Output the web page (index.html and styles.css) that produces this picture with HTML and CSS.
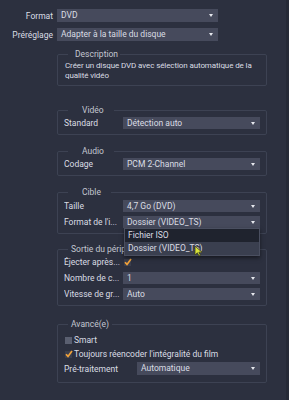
FILE: index.html
```html
<!DOCTYPE html>
<html lang="fr">
<head>
	<meta charset="UTF-8">
	<meta name="viewport" content="width=device-width, initial-scale=1.0">
	<title>Paramètres de gravure</title>
	<link rel="stylesheet" href="styles.css">
</head>
<body>
<div class="panel">
	<div class="top-form">
		<label class="top-label">Format</label>
		<div class="combo combo-top">DVD</div>
		<label class="top-label">Préréglage</label>
		<div class="combo combo-top">Adapter à la taille du disque</div>
	</div>

	<!-- Description -->
	<fieldset class="group group-desc">
		<legend>Description</legend>
		<p class="desc-text">Créer un disque DVD avec sélection automatique de la qualité vidéo</p>
	</fieldset>

	<!-- Vidéo -->
	<fieldset class="group group-mid">
		<legend>Vidéo</legend>
		<div class="row">
			<span class="row-label">Standard</span>
			<div class="combo">Détection auto</div>
		</div>
	</fieldset>

	<!-- Audio -->
	<fieldset class="group group-mid">
		<legend>Audio</legend>
		<div class="row">
			<span class="row-label">Codage</span>
			<div class="combo">PCM 2-Channel</div>
		</div>
	</fieldset>

	<!-- Cible -->
	<fieldset class="group group-mid group-cible">
		<legend>Cible</legend>
		<div class="row">
			<span class="row-label">Taille</span>
			<div class="combo">4,7 Go (DVD)</div>
		</div>
		<div class="row">
			<span class="row-label">Format de l'i...</span>
			<div class="combo combo-open">
				Dossier (VIDEO_TS)
				<ul class="dropdown">
					<li>Fichier ISO</li>
					<li class="hover">Dossier (VIDEO_TS)</li>
				</ul>
				<svg class="cursor" width="9" height="12" viewBox="0 0 9 12"><path d="M1 1 L1 10 L3.4 7.8 L5 11 L6.4 10.3 L4.9 7.2 L8 7.2 Z" fill="#d8e23a" stroke="#3a3f1a" stroke-width="0.8"/></svg>
			</div>
		</div>
	</fieldset>

	<!-- Sortie du périphérique -->
	<fieldset class="group group-sortie">
		<legend>Sortie du périphérique</legend>
		<div class="row">
			<span class="row-label">Éjecter après...</span>
			<div class="check-cell">
				<span class="check checked"><svg width="8" height="8" viewBox="0 0 8 8"><path d="M1 4.2 L3 6.4 L7 1" fill="none" stroke="#f2a23a" stroke-width="1.7"/></svg></span>
			</div>
		</div>
		<div class="row">
			<span class="row-label">Nombre de c...</span>
			<div class="combo">1</div>
		</div>
		<div class="row">
			<span class="row-label">Vitesse de gr...</span>
			<div class="combo">Auto</div>
		</div>
	</fieldset>

	<!-- Avancé(e) -->
	<fieldset class="group group-avance">
		<legend>Avancé(e)</legend>
		<div class="check-row">
			<span class="check"></span>
			<span>Smart</span>
		</div>
		<div class="check-row">
			<span class="check checked"><svg width="8" height="8" viewBox="0 0 8 8"><path d="M1 4.2 L3 6.4 L7 1" fill="none" stroke="#f2a23a" stroke-width="1.7"/></svg></span>
			<span>Toujours réencoder l'intégralité du film</span>
		</div>
		<div class="row row-wide">
			<span class="row-label">Pré-traitement</span>
			<div class="combo">Automatique</div>
		</div>
	</fieldset>
</div>
</body>
</html>
```

FILE: styles.css
```css
:root {
    --background: #2c303f;
    --combo-bg: #464a5c;
    --group-border: #3d4253;
    --text: #dadde4;
    --legend: #c3c7d1;
    --popup-bg: #1f232e;
    --popup-hover: #3a3f4f;
    --edge: #262a37;
}

* {
    margin: 0;
    padding: 0;
    box-sizing: border-box;
}

html {
    background: var(--edge);
}

body {
    width: 286px;
    min-height: 400px;
    background: var(--background);
    color: var(--text);
    font-family: 'Roboto', 'Open Sans', sans-serif;
    font-size: 8.5px;
    line-height: 10px;
    overflow: hidden;
}

.panel {
    padding-top: 9px;
}

.top-form {
    display: grid;
    grid-template-columns: 53px 161px;
    column-gap: 4px;
    row-gap: 6px;
    align-items: center;
}

.top-label {
    text-align: right;
    white-space: nowrap;
}

.combo {
    position: relative;
    height: 12px;
    line-height: 12px;
    padding: 0 14px 0 4px;
    background: var(--combo-bg);
    white-space: nowrap;
}

.combo::after {
    content: '';
    position: absolute;
    right: 5px;
    top: 5px;
    border-left: 2.5px solid transparent;
    border-right: 2.5px solid transparent;
    border-top: 3px solid #e6e8ee;
}

.combo-top {
    height: 13px;
    line-height: 13px;
}

.group {
    margin-left: 57px;
    width: 210px;
    border: 1px solid var(--group-border);
    border-radius: 2px;
    padding: 2px 6px 5px;
    margin-top: 11px;
    min-width: 0;
}

.group legend {
    margin-left: 4px;
    padding: 0 3px;
    color: var(--legend);
    line-height: 10px;
}

.group-mid legend {
    padding: 0 10px 0 14px;
}

.group-desc {
    margin-top: 8px;
    padding: 2px 5px 4px 6px;
}

.group-desc legend {
    padding: 0 2px 0 7px;
}

.group-desc + .group {
    margin-top: 19px;
}

.desc-text {
    padding-left: 1px;
    font-size: 8px;
    letter-spacing: -0.1px;
}

.row {
    display: grid;
    grid-template-columns: 59px 1fr;
    align-items: center;
    min-height: 12px;
}

.row + .row {
    margin-top: 4px;
}

.row-label {
    white-space: nowrap;
    overflow: hidden;
    padding-right: 2px;
    font-size: 8.5px;
}

.check-cell {
    display: flex;
    align-items: center;
    padding-left: 1px;
}

.group-cible {
    padding-top: 3px;
}

.group-sortie {
    margin-top: 10px;
}

.group-avance {
    margin-top: 13px;
    padding: 6px 6px 7px;
}

.row-wide {
    grid-template-columns: 73px 1fr;
    margin-top: 3px;
}

.row-wide .combo {
    height: 13px;
    line-height: 13px;
}

.check-row {
    display: flex;
    align-items: center;
    gap: 2px;
    height: 10px;
    margin-left: 1px;
}

.check-row + .check-row {
    margin-top: 4px;
}

.check {
    display: inline-flex;
    align-items: center;
    justify-content: center;
    width: 7px;
    height: 7px;
    background: #5a5f70;
}

.check.checked {
    background: #3a3e4d;
}

.check svg {
    display: block;
    flex-shrink: 0;
}

.dropdown {
    position: absolute;
    left: 1px;
    right: 0;
    top: 12px;
    list-style: none;
    background: var(--popup-bg);
    border: 1px solid #4a4f60;
    box-shadow: 0 2px 4px rgba(0, 0, 0, 0.5);
    z-index: 5;
}

.dropdown li {
    height: 13px;
    line-height: 13px;
    padding-left: 3px;
}

.dropdown li.hover {
    background: var(--popup-hover);
}

.cursor {
    position: absolute;
    left: 71px;
    top: 29px;
    z-index: 6;
}
```
